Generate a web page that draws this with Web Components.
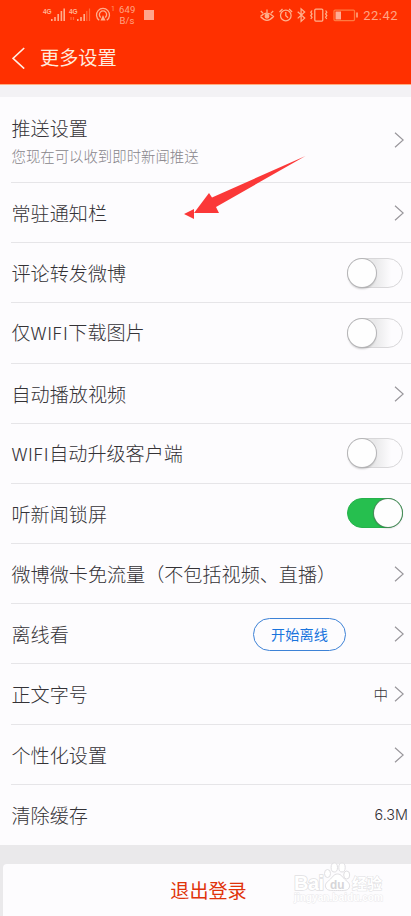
<!DOCTYPE html>
<html lang="zh-CN">
<head>
    <meta charset="UTF-8">
    <meta name="viewport" content="width=device-width, initial-scale=1.0">
    <title>更多设置</title>
    <style>
        html, body { height: 100%; }
        body {
            margin: 0;
            overflow: hidden;
            background: #fdfcfe;
            color: #343236;
            font-family: "Noto Sans CJK SC", sans-serif;
            font-weight: 300;
        }
        .latin { font-family: Inter, sans-serif; font-size: 16.6px; letter-spacing: .8px; }
        .size { font-family: Inter, sans-serif; font-size: 14.4px; }
    </style>
</head>
<body>

    <settings-page>
        <status-bar slot="top"></status-bar>
        <title-bar slot="top">更多设置</title-bar>

        <setting-row arrow tall>推送设置<span slot="sub">您现在可以收到即时新闻推送</span></setting-row>
        <setting-row arrow>常驻通知栏</setting-row>
        <setting-row>评论转发微博<toggle-switch slot="end"></toggle-switch></setting-row>
        <setting-row>仅<span class="latin">WIFI</span>下载图片<toggle-switch slot="end"></toggle-switch></setting-row>
        <setting-row arrow>自动播放视频</setting-row>
        <setting-row><span class="latin">WIFI</span>自动升级客户端<toggle-switch slot="end"></toggle-switch></setting-row>
        <setting-row>听新闻锁屏<toggle-switch slot="end" on></toggle-switch></setting-row>
        <setting-row arrow>微博微卡免流量（不包括视频、直播）</setting-row>
        <setting-row arrow>离线看<pill-button slot="end">开始离线</pill-button></setting-row>
        <setting-row arrow>正文字号<span slot="end">中</span></setting-row>
        <setting-row arrow>个性化设置</setting-row>
        <setting-row last>清除缓存<span slot="end" class="size">6.3M</span></setting-row>

        <logout-button slot="bottom">退出登录</logout-button>
        <arrow-mark slot="over"></arrow-mark>
        <water-mark slot="over"></water-mark>
    </settings-page>

    <template id="page-template">
        <style>
            :host { display: flex; flex-direction: column; position: relative; height: 916px; overflow: hidden; }
            header { height: 84px; flex: none; background: #ff3000; border-bottom: 1px solid #ffad80; }
            .gap { height: 12px; flex: none; background: #f3f2f5; }
            footer { flex: 1; background: #eae9eb; padding: 19px 0 0 3px; box-sizing: border-box; display: flex; }
        </style>
        <header><slot name="top"></slot></header>
        <div class="gap"></div>
        <main><slot></slot></main>
        <footer><slot name="bottom"></slot></footer>
        <slot name="over"></slot>
    </template>

    <template id="status-template">
        <style>
            :host {
                display: flex; justify-content: space-between; height: 30px; box-sizing: border-box;
                padding: 0 13px 0 42px; color: #ffa585;
                font-family: Roboto, "Liberation Sans", sans-serif; font-weight: 400;
            }
            .side { display: flex; align-items: center; height: 30px; }
            svg { display: block; overflow: visible; flex: none; }
            .speed { font-size: 9.5px; line-height: 11.5px; width: 16px; margin: 0 0 0 4px; text-align: center; letter-spacing: .1px; }
            .stop { width: 10px; height: 10px; margin-left: 8.5px; background: #ffa58c; }
            .time { font-size: 13px; letter-spacing: .5px; margin-left: 5px; line-height: 30px; padding-top: 2px; }
            .net { font: bold 6.5px "Liberation Sans", sans-serif; fill: #ffb494; }
        </style>
        <div class="side">
            <svg width="73" height="30" viewBox="0 0 73 30" fill="none" stroke="#ffad8c" stroke-width="1.6">
                <text class="net" x="1" y="13.5" stroke="none">4G</text>
                <path d="M9.8 21v-2M13 21v-4M16.2 21v-7M19.4 21v-10M22.2 21V8.5"/>
                <text class="net" x="27" y="13.5" stroke="none">4G</text>
                <path d="M35.8 21v-2M39 21v-4M42.2 21v-7"/>
                <path d="M44.8 21v-10M47.5 21V8.5M29 20v-3M31.5 20v-3" stroke="#ff6a3c" stroke-width="1.2"/>
                <path d="M57.2 20.2a6.5 6.5 0 1 1 7.6 0M58.8 17.4a3.6 3.6 0 1 1 4.4 0" stroke-width="1.3"/>
                <path d="M61 15l-2.5 5.5h5z" fill="#ffad8c" stroke="none"/>
                <text x="69" y="11" font-size="7" fill="#ff9a70" stroke="none">1</text>
            </svg>
            <div class="speed">649<br>B/s</div>
            <div class="stop"></div>
        </div>
        <div class="side">
            <svg width="98" height="30" viewBox="0 0 98 30" fill="none" stroke="#ffb08c" stroke-width="1.25">
                <path d="M.5 16.5Q7 9.5 13.5 16.5Q7 24 .5 16.5M7 12.5V9.5M3 13.3L.8 11M11 13.3l2.2-2.3"/>
                <circle cx="7" cy="16.3" r="1.8" fill="#ffb08c"/>
                <circle cx="25.8" cy="15.5" r="5.3"/>
                <path d="M25.8 12v3.7l2.3 2M19.5 12l3-3M32.1 12l-3-3"/>
                <path d="M37.7 11.7l7 6.4-3.6 3.3V8.8l3.6 3.2-7 6.4"/>
                <rect x="54.8" y="9" width="8" height="12" rx="1"/>
                <path d="M52 10.5l-1.2 1.7 1.2 1.7-1.2 1.7 1.2 1.7-1.2 1.7M65.6 10.5l1.2 1.7-1.2 1.7 1.2 1.7-1.2 1.7 1.2 1.7"/>
                <rect x="74" y="10" width="20.5" height="10.5" rx="1" stroke="#ff7a40"/>
                <path d="M75.5 11.5h5.5v8h-5.5z" fill="#ffad94" stroke="none"/>
                <path d="M97 12.5v5" stroke-width="1.5"/>
            </svg>
            <div class="time">22:42</div>
        </div>
    </template>

    <template id="title-template">
        <style>
            :host { display: flex; align-items: center; height: 54px; padding-left: 12px; gap: 15px; color: #ffeadd; font-size: 19.2px; font-weight: 400; }
            svg { margin-top: 2px; }
            span { line-height: 54px; }
        </style>
        <svg width="13" height="22" viewBox="0 0 13 22" fill="none" stroke="#fff0e5" stroke-width="1.6"><path d="M12.2 1L1 11.3L12.2 21.6"/></svg>
        <span><slot></slot></span>
    </template>

    <template id="row-template">
        <style>
            :host { display: flex; height: 60.18px; padding-left: 11px; font-size: 19.1px; }
            :host([tall]) { height: 86px; }
            .line { flex: 1; display: flex; align-items: center; padding-right: 7px; border-bottom: 1px solid #e6e5e8; box-sizing: border-box; }
            :host([last]) .line { border-bottom: 0; padding-right: 3px; }
            .label { flex: 1; line-height: 26px; padding: 1px 0 0 .5px; white-space: nowrap; }
            .end { display: flex; align-items: center; font-size: 14.6px; line-height: 20px; padding-top: 1px; }
            .sub { display: none; font-size: 14.4px; line-height: 20px; padding-top: 5px; color: #87858a; }
            :host([tall]) .sub { display: block; }
            svg { display: none; margin: 1px 0 0 5px; flex: none; }
            :host([arrow]) svg { display: block; }
            :host(:not([arrow]):not([last])) .line { padding-right: 8px; }
            :host(:not([arrow]):not([last])) .end { padding-top: 0; }
        </style>
        <div class="line">
            <div class="label"><slot></slot><div class="sub"><slot name="sub"></slot></div></div>
            <div class="end"><slot name="end"></slot></div>
            <svg width="11" height="16" viewBox="0 0 11 16" fill="none" stroke="#98969b" stroke-width="1.2"><path d="M2 .8L10.2 8L2 15.2"/></svg>
        </div>
    </template>

    <template id="toggle-template">
        <style>
            :host {
                display: flex; width: 56px; height: 30px; box-sizing: border-box; border-radius: 15px;
                border: 1px solid #d8d7d9; background: linear-gradient(90deg, #e9e9ea 50%, #fdfcfe 80%);
            }
            i { width: 28px; height: 28px; border-radius: 50%; background: #fefefe; box-shadow: 0 0 0 1px #b5b5b7, 0 2px 2px rgba(0, 0, 0, .22); }
            :host([on]) { background: #26bf4f; border-color: #26b24c; justify-content: flex-end; }
            :host([on]) i { box-shadow: 0 0 0 1px #4c8a5c, 0 1px 2px rgba(0, 0, 0, .3); }
        </style>
        <i></i>
    </template>

    <template id="pill-template">
        <style>
            :host {
                display: flex; align-items: center; justify-content: center; width: 93px; height: 33px;
                margin-right: 42px; box-sizing: border-box; border: 1px solid #3d82d6; border-radius: 17px;
                color: #1974dd; font-size: 14.2px; font-weight: 400;
            }
        </style>
        <slot></slot>
    </template>

    <template id="logout-template">
        <style>
            :host {
                flex: 1; display: flex; align-items: center; justify-content: center; height: 60px; box-sizing: border-box;
                background: #fdfcfe; border-radius: 4px 0 0 0; color: #e0330a; font-size: 19.1px; font-weight: 400;
                padding: 0 0 7px 3px;
            }
        </style>
        <slot></slot>
    </template>

    <template id="arrow-template">
        <style>
            :host { display: block; position: absolute; left: 184px; top: 155px; }
            svg { display: block; }
        </style>
        <svg width="122" height="66" viewBox="0 0 122 66" fill="#fb3838">
            <path d="M121.5 1L28 42.500L25 38L10 58H35L32 52L121.5 1ZM0 59L10 54V64Z"/>
        </svg>
    </template>

    <template id="water-template">
        <style>
            :host { display: block; position: absolute; left: 290px; top: 860px; }
            svg { display: block; }
            text { font-family: "Liberation Sans", "Noto Sans CJK SC", sans-serif; font-weight: bold; paint-order: stroke; }
        </style>
        <svg width="100" height="50" viewBox="0 0 100 50" fill="#fff" stroke="#e0dfe2" stroke-width="1.5">
            <text x="4" y="30" font-size="20" textLength="30">Bai</text>
            <g stroke-width="1">
                <ellipse cx="37.5" cy="13.500" rx="3" ry="4"/>
                <ellipse cx="44.3" cy="7.500" rx="3.2" ry="4.5"/>
                <ellipse cx="52" cy="7.500" rx="3.2" ry="4.5"/>
                <ellipse cx="56.7" cy="15" rx="3" ry="4"/>
                <path d="M47.500 14c-4 0-5 3.500-8 6c-3.500 2.500-5 5-3.500 8c1.500 3 6 2.500 11.500 2.500s10 .5 11.500-2.500c1.500-3 0-5.500-3.500-8c-3-2.500-4-6-8-6z"/>
            </g>
            <text x="40" y="28.500" font-size="12.500" fill="#d6d5d8" stroke="none" textLength="14.500" lengthAdjust="spacingAndGlyphs">du</text>
            <text x="62" y="28.500" font-size="15" textLength="30" stroke-width="1">经验</text>
            <text x="4" y="41" font-size="10" textLength="89" stroke="#e9e8eb" stroke-width=".9" lengthAdjust="spacingAndGlyphs">jingyan.baidu.com</text>
        </svg>
    </template>

    <script>

        // 태그 이름 : 템플릿 id
        const parts = {
            'settings-page': 'page-template',
            'status-bar': 'status-template',
            'title-bar': 'title-template',
            'setting-row': 'row-template',
            'toggle-switch': 'toggle-template',
            'pill-button': 'pill-template',
            'logout-button': 'logout-template',
            'arrow-mark': 'arrow-template',
            'water-mark': 'water-template'
        };

        for (const name in parts) {
            customElements.define(name, class extends HTMLElement {
                connectedCallback() {
                    if (this.shadowRoot) return;
                    this.attachShadow({mode: 'open'});
                    this.shadowRoot.append(document.getElementById(parts[name]).content.cloneNode(true));
                }
            });
        }

        document.querySelectorAll('toggle-switch').forEach(function (el) {
            el.addEventListener('click', function () {
                el.toggleAttribute('on');
            });
        });

    </script>

</body>
</html>
